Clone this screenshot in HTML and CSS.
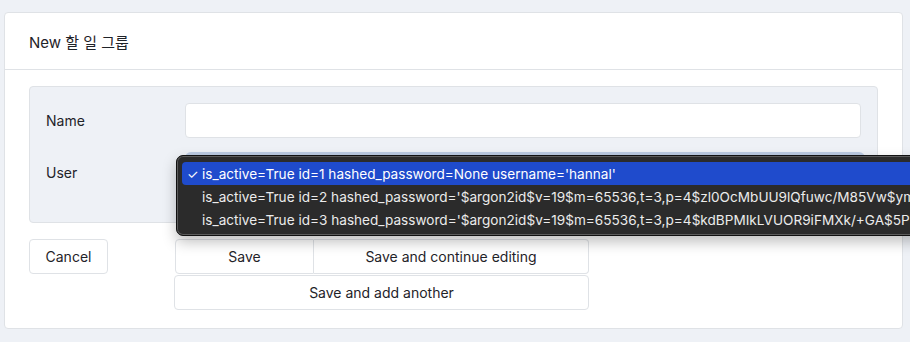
FILE: index.html
```html
<!DOCTYPE html>
<html>
  <head>
    <meta charset="utf-8">
    <link rel="stylesheet" href="styles.css">
  </head>
  <body>
    <div class="card">
      <div class="card-header">
        <h1>New 할 일 그룹</h1>
      </div>
      <div class="card-body">
        <div class="fieldset">
          <div class="field">
            <label>Name</label>
            <div class="input"></div>
          </div>
          <div class="field user">
            <label>User</label>
            <div class="select"></div>
            <div class="popup">
              <div class="option selected"><span class="check">✓</span>is_active=True id=1 hashed_password=None username='hannal'</div>
              <div class="option"><span class="check"></span>is_active=True id=2 hashed_password='$argon2id$v=19$m=65536,t=3,p=4$zl0OcMbUU9lQfuwc/M85Vw$ym</div>
              <div class="option"><span class="check"></span>is_active=True id=3 hashed_password='$argon2id$v=19$m=65536,t=3,p=4$kdBPMIkLVUOR9iFMXk/+GA$5P</div>
            </div>
          </div>
        </div>
        <div class="actions">
          <button class="btn cancel">Cancel</button>
          <div class="save-group">
            <div class="save-row">
              <button class="btn save">Save</button>
              <button class="btn cont">Save and continue editing</button>
            </div>
            <button class="btn another">Save and add another</button>
          </div>
        </div>
      </div>
    </div>
  </body>
</html>
```
FILE: styles.css
```css
* {
  margin: 0;
  padding: 0;
  box-sizing: border-box;
}

body {
  background: #eef1f6;
  color: #1f2329;
  font-family: Inter, "Noto Sans", "Noto Sans CJK KR", sans-serif;
  font-size: 14px;
  padding: 12px 7px 0 4px;
  overflow: hidden;
}

.card {
  background: white;
  border: 1px solid #dfe2e6;
  border-radius: 4px;
  height: 317px;
}

.card-header {
  height: 57px;
  border-bottom: 1px solid #dfe2e6;
  display: flex;
  align-items: center;
  padding: 0 24px;
}

.card-header h1 {
  font-size: 15px;
  font-weight: 400;
}

.card-body {
  padding: 16px 24px;
}

.fieldset {
  background: #eef1f6;
  border: 1px solid #dfe2e6;
  border-radius: 4px;
  padding: 16px 16px 35px 16px;
  display: flex;
  flex-direction: column;
  gap: 14px;
}

.field {
  display: flex;
  align-items: center;
}

.field label {
  width: 139px;
}

.user label {
  margin-top: 5px;
}

.input {
  flex: 1;
  height: 35px;
  background: white;
  border: 1px solid #dfe2e6;
  border-radius: 4px;
}

.user {
  position: relative;
}

.select {
  flex: 1;
  height: 35px;
  margin-right: -4px;
  background: #bccbe3;
  border-radius: 6px;
}

.popup {
  position: absolute;
  left: 130px;
  top: 3px;
  width: 760px;
  height: 81px;
  overflow: hidden;
  background: #2b2b2b;
  border: 1px solid #111;
  box-shadow: 0 0 0 1px #5c5c5c inset, 0 6px 14px rgba(0, 0, 0, 0.25);
  border-radius: 7px;
  padding: 6px 0 0 5px;
  color: #ececec;
  font-size: 13.6px;
}

.option {
  height: 23px;
  display: flex;
  align-items: center;
  white-space: nowrap;
}

.option.selected {
  background: #1f4bcc;
  color: white;
  border-radius: 4px 0 0 4px;
}

.check {
  width: 20px;
  flex: none;
  padding-left: 5px;
  font-size: 13px;
}

.actions {
  display: flex;
  align-items: flex-start;
  margin-top: 16px;
  gap: 66px;
}

.btn {
  background: white;
  border: 1px solid #dfe2e6;
  border-radius: 4px;
  height: 35px;
  font-family: inherit;
  font-size: 14px;
  color: #1f2329;
}

.cancel {
  width: 79px;
}

.save-group {
  display: flex;
  flex-direction: column;
  width: 415px;
  gap: 1px;
}

.save-row {
  display: flex;
  padding-left: 1px;
}

.save {
  width: 139px;
  border-radius: 4px 0 0 4px;
}

.cont {
  flex: 1;
  border-left: none;
  border-radius: 0 4px 4px 0;
}

.another {
  width: 100%;
}
```
